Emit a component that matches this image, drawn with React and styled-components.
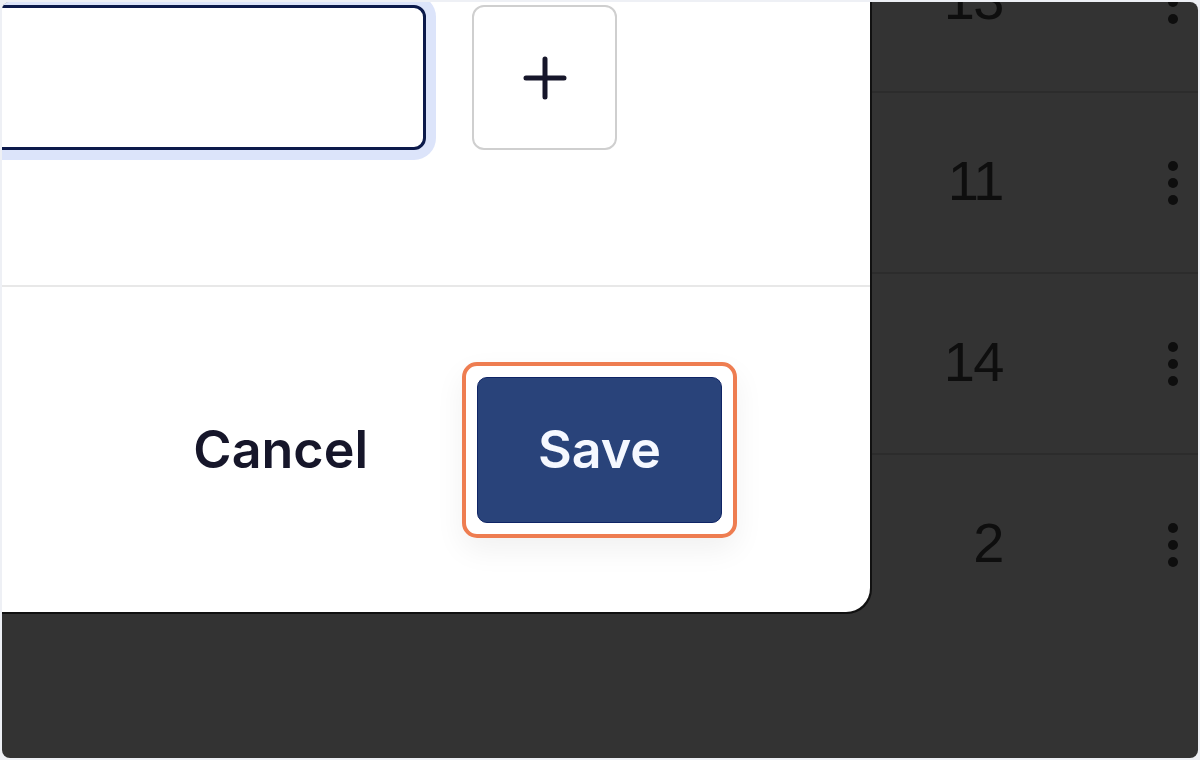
import React from 'react';
import styled, { createGlobalStyle } from 'styled-components';

const GlobalStyle = createGlobalStyle`
  html, body {
    margin: 0;
    padding: 0;
    background: #eef0f5;
  }
  body {
    font-family: Inter, "Noto Sans", sans-serif;
  }
`;

const Frame = styled.div`
  position: relative;
  margin: 2px;
  width: 1196px;
  height: 756px;
  border-radius: 8px;
  background: #333333;
  overflow: hidden;
`;

/* table behind the overlay, scrolled a little so the first row is cut off */
const Table = styled.div`
  display: flex;
  flex-direction: column;
  margin-top: -90px;
`;

const Row = styled.div`
  display: flex;
  align-items: center;
  height: 179px;
  padding-right: 20px;
  border-bottom: 2px solid ${(p) => (p.$last ? 'transparent' : '#2c2c2c')};
`;

const Count = styled.div`
  flex: 1;
  text-align: right;
  padding: 0 1px 3px 0;
  font-family: "Liberation Sans", Arial, sans-serif;
  font-size: 56px;
  letter-spacing: -1.5px;
  color: #0e0e0e;
  line-height: 1;
`;

const Kebab = styled.div`
  margin-left: 164px;
  display: flex;
  flex-direction: column;
  gap: 7px;
  span {
    width: 10px;
    height: 10px;
    border-radius: 50%;
    background: #0e0e0e;
  }
`;

const Modal = styled.div`
  position: absolute;
  left: -300px;
  top: -120px;
  width: 1168px;
  background: #ffffff;
  border-radius: 0 0 24px 24px;
  box-shadow: 1px 1px 0 1px #111;
`;

const Body = styled.div`
  padding: 123px 253px 135px 40px;
`;

const InputRow = styled.div`
  display: flex;
  gap: 46px;
`;

const Input = styled.input`
  flex: 1;
  height: 145px;
  box-sizing: border-box;
  border: 3px solid #0c1a4b;
  border-radius: 12px;
  box-shadow: 0 0 0 10px #dce4fa;
  outline: none;
  background: #fff;
`;

const IconButton = styled.button`
  width: 145px;
  height: 145px;
  box-sizing: border-box;
  display: flex;
  align-items: center;
  justify-content: center;
  background: #fff;
  border: 2px solid #cfcfcf;
  border-radius: 12px;
  padding: 0;
`;

const Footer = styled.div`
  height: 325px;
  border-top: 2px solid #e8e8e8;
  display: flex;
  align-items: center;
  justify-content: flex-end;
  padding-right: 133px;
  gap: 94px;
`;

const TextButton = styled.button`
  background: none;
  border: none;
  padding: 0;
  font-family: Inter, "Noto Sans", sans-serif;
  font-weight: 600;
  font-size: 52px;
  color: #16162a;
`;

const Highlight = styled.div`
  padding: 11px;
  border: 4px solid #ee7d51;
  border-radius: 15px;
  box-shadow: 0 12px 30px rgba(0, 0, 0, 0.06);
`;

const PrimaryButton = styled.button`
  display: block;
  width: 245px;
  height: 146px;
  box-sizing: border-box;
  background: #29437a;
  border: 1.5px solid #0f2466;
  border-radius: 10px;
  font-family: Inter, "Noto Sans", sans-serif;
  font-weight: 600;
  font-size: 52px;
  color: #f5f8ff;
`;

const PlusIcon = () => (
  <svg width="46" height="46" viewBox="0 0 46 46">
    <path d="M23 4v38M4 23h38" stroke="#16162a" strokeWidth="5" strokeLinecap="round" />
  </svg>
);

const counts = [13, 11, 14, 2];

export default function App() {
  return (
    <>
      <GlobalStyle />
      <Frame>
        <Table>
          {counts.map((c, i) => (
            <Row key={i} $last={i === counts.length - 1}>
              <Count>{c}</Count>
              <Kebab>
                <span />
                <span />
                <span />
              </Kebab>
            </Row>
          ))}
        </Table>
        <Modal>
          <Body>
            <InputRow>
              <Input />
              <IconButton>
                <PlusIcon />
              </IconButton>
            </InputRow>
          </Body>
          <Footer>
            <TextButton>Cancel</TextButton>
            <Highlight>
              <PrimaryButton>Save</PrimaryButton>
            </Highlight>
          </Footer>
        </Modal>
      </Frame>
    </>
  );
}
